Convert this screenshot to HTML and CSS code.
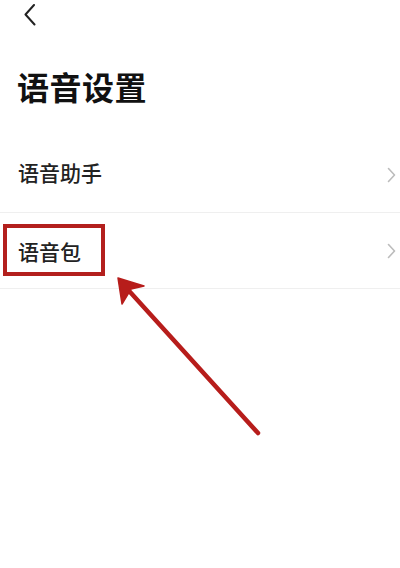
FILE: index.html
```html
<!DOCTYPE html>
<html lang="zh-CN">
<head>
<meta charset="utf-8">
<title>语音设置</title>
<link rel="stylesheet" href="styles.css">
</head>
<body>
<div class="page">
  <div class="topbar">
    <svg class="back" width="12" height="22" viewBox="0 0 12 22"><path d="M10 1 L1.5 10.5 L10.5 20.5" fill="none" stroke="#222" stroke-width="2" stroke-linecap="round" stroke-linejoin="round"/></svg>
  </div>
  <h1 class="title">语音设置</h1>
  <div class="list">
    <div class="row"><span class="label">语音助手</span><svg class="chev" width="9" height="16" viewBox="0 0 9 16"><path d="M1.5 1.5 L7.5 8 L1.5 14.5" fill="none" stroke="#bcbcbc" stroke-width="1.6" stroke-linecap="round" stroke-linejoin="round"/></svg></div>
    <div class="row"><span class="label">语音包</span><svg class="chev" width="9" height="16" viewBox="0 0 9 16"><path d="M1.5 1.5 L7.5 8 L1.5 14.5" fill="none" stroke="#bcbcbc" stroke-width="1.6" stroke-linecap="round" stroke-linejoin="round"/></svg></div>
  </div>
  <div class="highlight"></div>
  <svg class="arrow" width="400" height="568" viewBox="0 0 400 568">
    <line x1="258" y1="433" x2="121" y2="282" stroke="#b71d1b" stroke-width="4.5" stroke-linecap="round"/>
    <path d="M118 278 L144 286 L131 289 L122 304 Z" fill="#b71d1b" stroke="#b71d1b" stroke-width="1.5" stroke-linejoin="round"/>
  </svg>
</div>
</body>
</html>
```
FILE: styles.css
```css
html, body {
  margin: 0;
  padding: 0;
  background: #ffffff;
}
.page {
  position: relative;
  width: 400px;
  height: 568px;
  overflow: hidden;
  font-family: "Noto Sans CJK SC", "Noto Sans", sans-serif;
  color: #1e1e1e;
}
.topbar {
  height: 32px;
  display: flex;
  align-items: flex-start;
  padding: 4px 0 0 24px;
  box-sizing: border-box;
}
.back {
  display: block;
}
.title {
  margin: 0;
  padding: 38px 0 35px 17px;
  font-size: 32px;
  line-height: 32px;
  font-weight: 700;
  color: #111;
  letter-spacing: 0.5px;
}
.list {
  display: flex;
  flex-direction: column;
}
.row {
  height: 75px;
  display: flex;
  align-items: center;
  justify-content: space-between;
  padding: 0 4px 0 18px;
  border-bottom: 1px solid #efefef;
}
.row:first-child .label {
  margin-bottom: 5px;
}
.label {
  font-size: 21px;
  line-height: 24px;
  font-weight: 500;
  color: #222;
}
.chev {
  display: block;
}
.highlight {
  position: absolute;
  left: 3px;
  top: 224px;
  width: 102px;
  height: 52px;
  box-sizing: border-box;
  border: 4px solid #b3201d;
}
.arrow {
  position: absolute;
  left: 0;
  top: 0;
  pointer-events: none;
}
```
